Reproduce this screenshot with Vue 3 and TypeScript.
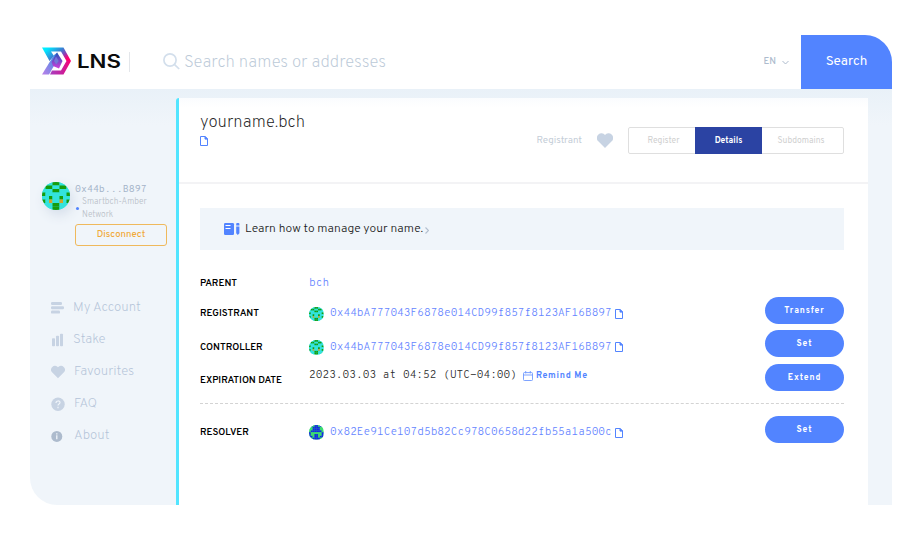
<script setup lang="ts">
import { defineComponent, h } from 'vue'

type Row = { label: string; value: string; kind: string; action?: string }

const rows: Row[] = [
  { label: 'REGISTRANT', value: '0x44bA777043F6878e014CD99f857f8123AF16B897', kind: 'face', action: 'Transfer' },
  { label: 'CONTROLLER', value: '0x44bA777043F6878e014CD99f857f8123AF16B897', kind: 'face', action: 'Set' },
  { label: 'EXPIRATION DATE', value: '2023.03.03 at 04:52 (UTC-04:00)', kind: 'date', action: 'Extend' },
  { label: 'RESOLVER', value: '0x82Ee91Ce107d5b82Cc978C0658d22fb55a1a500c', kind: 'blue', action: 'Set' },
]

const patterns: Record<string, string[]> = {
  face: ['cccggccc', 'cggccggc', 'cccggccc', 'gccccccg', 'ccgccgcc', 'gcoccocg', 'cccggccc', 'occggcco'],
  blue: ['bbgbbgbb', 'ggbbbbgg', 'ggbbbbgg', 'gbbbbbbg', 'bggggggb', 'bggbbggb', 'bbgbbgbb', 'ggbbbbgg'],
}
const palettes: Record<string, Record<string, string>> = {
  face: { c: '#33e3dd', g: '#179c0c', o: '#cfa52c' },
  blue: { g: '#3ddb72', b: '#1224e8' },
}

const Blockie = defineComponent({
  props: { kind: { type: String, required: true } },
  setup(props) {
    return () =>
      h(
        'svg',
        { viewBox: '0 0 8 8' },
        [
          h('rect', { width: 8, height: 8, fill: props.kind === 'face' ? palettes.face.c : palettes.blue.g }),
          ...patterns[props.kind].flatMap((line, y) =>
            [...line].map((c, x) => h('rect', { x, y, width: 1, height: 1, fill: palettes[props.kind][c] })),
          ),
        ],
      )
  },
})

const CopyIcon = defineComponent({
  setup() {
    return () =>
      h('svg', { viewBox: '0 0 8 10', fill: 'none', stroke: '#5284ff', 'stroke-width': 1 }, [
        h('path', { d: 'M.5.5h4.7l2.3 2.4v6.6h-7z' }),
        h('path', { d: 'M5 .5v2.6h2.5z', fill: '#5284ff' }),
      ])
  },
})
</script>

<template>
  <div class="app">
    <header class="top">
      <svg class="logo" viewBox="0 0 29 28">
        <defs>
          <linearGradient id="lg" x1="0" y1="0" x2="1" y2=".55">
            <stop offset="0" stop-color="#00f5ff" />
            <stop offset=".2" stop-color="#00e5ff" />
            <stop offset=".58" stop-color="#3a80d2" />
            <stop offset=".8" stop-color="#8a40b8" />
            <stop offset="1" stop-color="#ff0070" />
          </linearGradient>
          <linearGradient id="lm" x1="0" y1="0" x2="1" y2="0">
            <stop offset="0" stop-color="#a83fc0" />
            <stop offset=".6" stop-color="#c81f9c" />
            <stop offset="1" stop-color="#ff0070" />
          </linearGradient>
          <linearGradient id="lp" x1="1" y1="0" x2="0" y2="1">
            <stop offset="0" stop-color="#2c90e6" />
            <stop offset="1" stop-color="#bd80e8" />
          </linearGradient>
          <linearGradient id="lb" x1="0" y1="0" x2="0" y2="1">
            <stop offset="0" stop-color="#1c52b8" />
            <stop offset="1" stop-color="#cf3fda" />
          </linearGradient>
        </defs>
        <path d="M0 .5h21.500L29 14h-4.500L19 4.500H9L12 9 7.500 14z" fill="url(#lg)" />
        <path d="M29 14l-7.500 13.500H8L10 23.500h9L24.500 14z" fill="url(#lm)" />
        <path d="M0 27.500 12 8l3.500-2.500L13 17 7 27.500z" fill="url(#lp)" />
        <path d="M15 5.500 20.500 14 17 21.500 11 19 9.500 15z" fill="url(#lb)" />
        <path d="m14 9.500 2.700 4.500-2.500 3.500-2.200-3.500z" fill="#7377d8" />
      </svg>
      <span class="brand">LNS</span>
      <i class="sep"></i>
      <svg class="glass" viewBox="0 0 17 17" fill="none" stroke="#d3dfec" stroke-width="1.7">
        <circle cx="7" cy="7" r="6.100" />
        <path d="m11.600 11.600 4.600 4.400" />
      </svg>
      <span class="placeholder">Search names or addresses</span>
      <span class="lang">EN</span>
      <svg class="chev" viewBox="0 0 7 5" fill="none" stroke="#adbbcd" stroke-width="1"><path d="m.5 1 3 3 3-3" /></svg>
      <button class="search">Search</button>
    </header>

    <div class="body">
      <aside class="side">
        <div class="account">
          <div class="avatar"><Blockie kind="face" /></div>
          <div class="who">
            <div class="addr">0x44b...B897</div>
            <div class="net"><i class="dot"></i><span>Smartbch-Amber<br />Network</span></div>
            <button class="disconnect">Disconnect</button>
          </div>
        </div>
        <nav class="menu">
          <a class="item my">
            <svg viewBox="0 0 14 14" fill="#c7d3e3"><rect x="0" y="1" width="11" height="3" rx="1.2" /><rect x="0" y="5.3" width="13" height="3" rx="1.2" /><rect x="0" y="9.6" width="9" height="3" rx="1.2" /></svg>
            <span>My Account</span>
          </a>
          <a class="item stake">
            <svg viewBox="0 0 14 14" fill="#c7d3e3"><rect x="1" y="5.2" width="3" height="8" rx=".8" /><rect x="5" y="2.8" width="3" height="10.4" rx=".8" /><rect x="9" y=".8" width="3" height="12.4" rx=".8" /></svg>
            <span>Stake</span>
          </a>
          <a class="item fav">
            <svg viewBox="0 0 14 14" fill="#c7d3e3"><path d="M7 13.3 1.3 7.6A4 4 0 0 1 1.3 2 3.7 3.7 0 0 1 7 2.3 3.7 3.7 0 0 1 12.7 2a4 4 0 0 1 0 5.6z" /></svg>
            <span>Favourites</span>
          </a>
          <a class="item faq">
            <svg viewBox="0 0 14 14"><circle cx="7" cy="7.3" r="6.7" fill="#c7d3e3" /><path d="M5 6.100c0-2.800 4-2.700 4-.5 0 1.500-2 1.200-2 2.800M7 9.800v1.400" fill="none" stroke="#f0f5fa" stroke-width="1.2" /></svg>
            <span>FAQ</span>
          </a>
          <a class="item about">
            <svg viewBox="0 0 14 14"><circle cx="5.8" cy="7.4" r="5.5" fill="#adbbcd" /><path d="M5.8 4.2v1.3M5.8 6.3v4" stroke="#f0f5fa" stroke-width="1.3" /></svg>
            <span>About</span>
          </a>
        </nav>
      </aside>

      <main class="panel">
        <section class="head">
          <div class="title">
            <span class="name">yourname.bch</span>
            <CopyIcon class="copy" />
          </div>
          <span class="role">Registrant</span>
          <svg class="heart" viewBox="0 0 16 15" fill="#c7d3e3"><path d="M8 15 1.3 8.3A4.6 4.6 0 0 1 1.4 1.5 4.3 4.3 0 0 1 8 2a4.3 4.3 0 0 1 6.6-.5 4.6 4.6 0 0 1 .1 6.8z" /></svg>
          <div class="tabs">
            <span class="tab first">Register</span>
            <span class="tab on">Details</span>
            <span class="tab last">Subdomains</span>
          </div>
        </section>

        <div class="learn">
          <svg class="book" viewBox="0 0 16 12"><rect width="10" height="12" rx="1.3" fill="#5284ff" /><path d="M1.500 2.500h5M1.500 5.500h5" stroke="#fff" stroke-width="1" /><path d="M12.2 3.4h3.2v6.8l-1.600 1.800-1.600-1.800zM12.2 2.4V.9q0-.9.9-.9h1.4q.9 0 .9.9v1.5z" fill="#5284ff" /></svg>
          <span class="learn-text">Learn how to manage your name.</span>
          <svg class="arrow" viewBox="0 0 4 7" fill="none" stroke="#b3bfcf" stroke-width="1.2"><path d="m.5.5 3 3-3 3" /></svg>
        </div>

        <div class="rows">
          <div class="row parent">
            <b class="label">PARENT</b>
            <span class="mono bch">bch</span>
          </div>
          <div v-for="r in rows" :key="r.label" class="row" :class="r.kind">
            <b class="label">{{ r.label }}</b>
            <template v-if="r.kind === 'date'">
              <div class="when">
                <span class="mono dark">{{ r.value }}</span>
                <svg class="cal" viewBox="0 0 10 10" fill="none" stroke="#6f98ff" stroke-width=".9"><rect x=".5" y="1.6" width="9" height="7.9" rx=".8" /><path d="M.5 4h9M2.7 0v2.4M7.3 0v2.4" /></svg>
                <span class="remind">Remind Me</span>
              </div>
            </template>
            <template v-else>
              <Blockie class="mini" :kind="r.kind" />
              <span class="mono">{{ r.value }}</span>
              <CopyIcon class="copy" />
            </template>
            <button class="pill">{{ r.action }}</button>
          </div>
        </div>
      </main>
    </div>
  </div>
</template>

<style>
body {
  background: #fff;
}
</style>

<style scoped>
* {
  box-sizing: border-box;
}
svg {
  display: block;
  flex: none;
}
button {
  font: inherit;
  border: 0;
  padding: 0;
}
.app {
  width: 862px;
  height: 470px;
  margin: 35px 30px;
  font-family: Overpass, 'Open Sans', sans-serif;
  white-space: nowrap;
  display: flex;
  flex-direction: column;
  border-radius: 0 27px 0 27px;
  overflow: hidden;
}
.top {
  height: 53.5px;
  display: flex;
  align-items: center;
  background: #fff;
  flex: none;
}
.logo {
  width: 29px;
  height: 28px;
  margin: 0 0 2px 12px;
}
.brand {
  width: 46px;
  margin: 0 6px 2px 6px;
  font: 600 18.5px/1 Inter, sans-serif;
  transform: scaleX(1.2);
  transform-origin: left;
  color: #0b0b0b;
}
.sep {
  width: 1px;
  height: 20px;
  background: #e3e6ea;
}
.glass {
  width: 17px;
  height: 17px;
  margin: 0 4px 0 33px;
}
.placeholder {
  font-size: 16.9px;
  font-weight: 200;
  color: #bccad8;
  padding-top: 1px;
}
.lang {
  margin-left: auto;
  font-size: 9.5px;
  font-weight: 500;
  color: #adbbcd;
}
.chev {
  width: 7px;
  height: 5px;
  margin: 1px 12px 0 6px;
}
.search {
  width: 91px;
  height: 53.5px;
  background: #5284ff;
  color: #fff;
  font-size: 13.5px;
  font-weight: 400;
}
.body {
  flex: 1;
  display: flex;
  padding: 9.5px 24px 0 0;
  background: linear-gradient(#e9f1f8, #f0f5fa 36px);
}
.side {
  width: 146px;
  padding: 84px 0 0 12px;
  flex: none;
}
.account {
  display: flex;
}
.avatar {
  width: 28px;
  height: 28px;
  border-radius: 50%;
  overflow: hidden;
  box-shadow: 3px 5px 12px #d5deea;
}
.who {
  margin-left: 5px;
}
.addr {
  margin: 1px 0 -1px;
  font: 9.7px/14px 'Overpass Mono', 'Liberation Mono', monospace;
  color: #a3b3c8;
}
.net {
  display: flex;
  margin-left: 1px;
  font-size: 8.4px;
  font-weight: 300;
  line-height: 12.5px;
  color: #b9c0c8;
}
.dot {
  width: 3px;
  height: 3px;
  border-radius: 50%;
  background: #5284ff;
  margin: 11px 3px 0 0;
}
.disconnect {
  width: 92px;
  height: 22px;
  margin-top: 3px;
  border: 1px solid #efb95c;
  border-radius: 3px;
  background: transparent;
  color: #f0aa3a;
  font-size: 9.5px;
  font-weight: 500;
  display: block;
}
.menu {
  margin-top: 45px;
  padding-left: 9px;
}
.item {
  height: 32px;
  display: flex;
  align-items: center;
  font-size: 13.3px;
  font-weight: 200;
  color: #b3c3d8;
}
.item svg {
  width: 14px;
  height: 14px;
  margin: 2px 8px 0 0;
}
.fav svg,
.faq svg,
.about svg {
  margin-right: 9px;
}
.panel {
  flex: 1;
  background: #fff;
  border-left: 3px solid #52e5ff;
  border-radius: 3px 3px 0 0;
}
.head {
  height: 86px;
  display: flex;
  align-items: center;
  padding: 0 24px 0 21px;
  border-bottom: 2px solid #f3f3f5;
  background: linear-gradient(#fafcfe, #fff 10px);
}
.title {
  margin-right: auto;
  margin-top: -24px;
}
.name {
  display: block;
  font-size: 16.8px;
  line-height: 24px;
  font-weight: 200;
  color: #1b1b1b;
}
.copy {
  width: 8px;
  height: 10px;
  margin: 2px 0 0 3px;
}
.title .copy {
  margin: 1px 0 0;
}
.role {
  font-size: 9.8px;
  color: #c5ced8;
  padding-top: 1px;
}
.heart {
  width: 16px;
  height: 15px;
  margin: 0 15px;
}
.tabs {
  display: flex;
  width: 216px;
  height: 27px;
  border: 1px solid #dfdfdf;
  border-radius: 2px;
}
.tab {
  display: flex;
  align-items: center;
  justify-content: center;
  font-size: 8.5px;
  color: #d0d0d0;
  padding-top: 1px;
}
.first {
  width: 66px;
  padding-left: 3px;
}
.on {
  width: 67px;
  margin: -1px 0;
  background: #2b43a3;
  color: #fff;
  font-weight: 700;
}
.last {
  width: 81px;
  padding-right: 3px;
}
.learn {
  margin: 24px 24px 0 21px;
  height: 42px;
  background: #f0f5fa;
  display: flex;
  align-items: center;
  padding-left: 24px;
}
.book {
  width: 16px;
  height: 12px;
}
.learn-text {
  margin-left: 5px;
  font-size: 12.1px;
  font-weight: 300;
  color: #1b1b1b;
}
.arrow {
  width: 4px;
  height: 7px;
  margin: 2px 0 0 2px;
}
.rows {
  padding: 16px 24px 0 21px;
}
.row {
  height: 33.5px;
  display: flex;
  align-items: center;
}
.parent {
  height: 32px;
  margin-bottom: -4.5px;
}
.label {
  width: 109px;
  font-size: 9.7px;
  font-weight: 600;
  color: #000;
  padding-top: 7px;
}
.date .label {
  padding-top: 6px;
}
.parent .label {
  padding-top: 2px;
}
.mono {
  font: 300 10.9px/14px 'Overpass Mono', 'Liberation Mono', monospace;
  color: #6484ff;
  padding-top: 6px;
}
.parent .mono {
  padding-top: 1px;
}
.row .dark {
  color: #2b2b2b;
  padding-top: 0;
}
.mini {
  width: 14.5px;
  height: 14.5px;
  margin: 7px 6.5px 0 0;
  border-radius: 50%;
  overflow: hidden;
}
.row > .copy {
  margin-top: 7px;
}
.when {
  display: flex;
  align-items: center;
  margin-top: -4px;
}
.cal {
  width: 10px;
  height: 10px;
  margin: 2px 3px 0 6px;
}
.remind {
  font-size: 8.8px;
  font-weight: 700;
  letter-spacing: 0.7px;
  color: #5284ff;
}
.pill {
  width: 79px;
  height: 27px;
  margin-left: auto;
  border-radius: 14px;
  background: #5284ff;
  color: #fff;
  font-size: 8.5px;
  font-weight: 700;
  letter-spacing: 0.9px;
}
.blue {
  margin-top: 9px;
  height: 51px;
  border-top: 1px dashed #d3d3d3;
}
</style>
